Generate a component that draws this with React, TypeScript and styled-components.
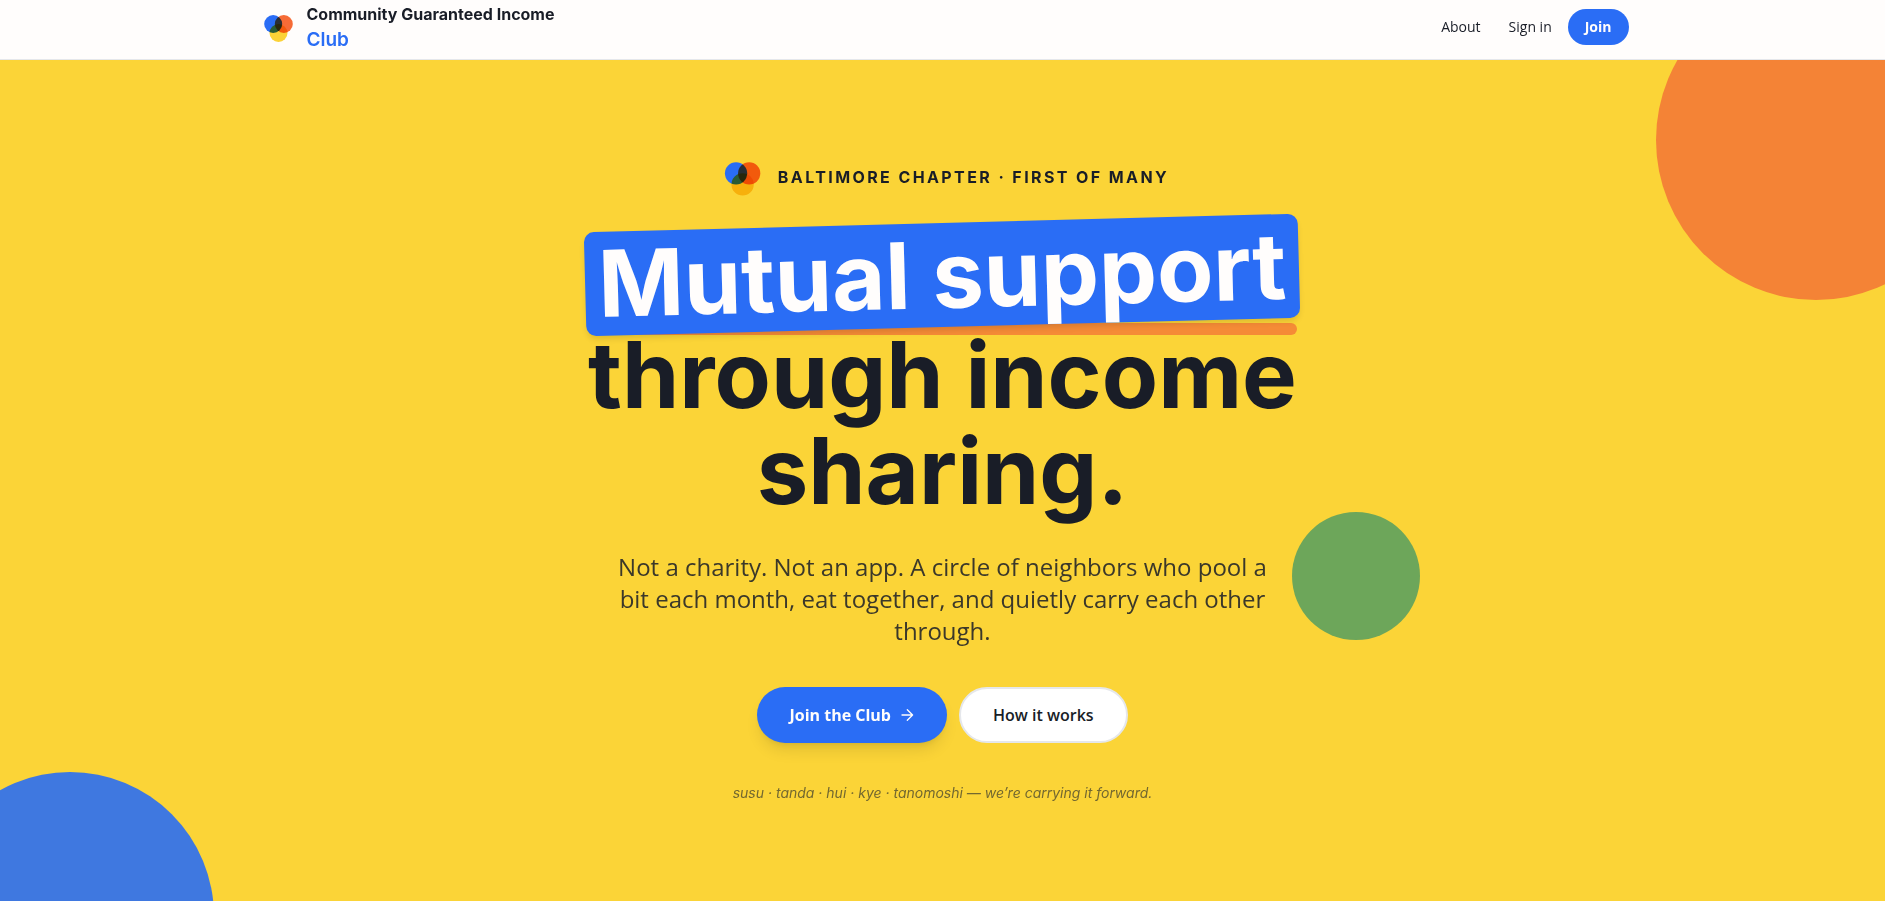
import React from "react";
import styled, { createGlobalStyle, ThemeProvider } from "styled-components";

const theme = {
  blue: "#2a6df5",
  orange: "#f66c36",
  yellow: "#fbd437",
  ink: "#191d27",
  paper: "#fffdfc",
  line: "#e5e7eb",
  display: `"Inter", "Liberation Sans", sans-serif`,
  body: `"Open Sans", "Noto Sans", sans-serif`,
};

const GlobalStyle = createGlobalStyle`
  *, *::before, *::after { box-sizing: border-box; }
  body {
    margin: 0;
    background: ${theme.yellow};
    color: ${theme.ink};
    font-family: ${theme.body};
    -webkit-font-smoothing: antialiased;
  }
`;

const Page = styled.div`
  display: flex;
  flex-direction: column;
  min-height: 100vh;
`;

const Header = styled.header`
  background: ${(p) => p.theme.paper};
  border-bottom: 1px solid ${(p) => p.theme.line};
  padding: 1px 16px 6px;
`;

const HeaderInner = styled.div`
  display: flex;
  align-items: center;
  justify-content: space-between;
  max-width: 1372px;
  margin: 0 auto;
`;

const Brand = styled.a`
  display: flex;
  align-items: center;
  gap: 8px;
  color: inherit;
  text-decoration: none;
`;

const BrandName = styled.span`
  display: flex;
  flex-direction: column;
  font-family: ${(p) => p.theme.display};
  font-size: 16px;
  font-weight: 700;
  line-height: 26px;
`;

const BrandAccent = styled.span`
  color: ${(p) => p.theme.blue};
  font-size: 19px;
  font-weight: 600;
`;

const Nav = styled.nav`
  display: flex;
  align-items: center;
  gap: 4px;
`;

const NavLink = styled.a`
  padding: 8px 12px;
  color: inherit;
  font-size: 14px;
  font-weight: 500;
  line-height: 20px;
  text-decoration: none;
`;

const NavButton = styled.button`
  height: 36px;
  padding: 0 17px;
  border: 0;
  border-radius: 18px;
  background: ${(p) => p.theme.blue};
  color: ${(p) => p.theme.paper};
  font: 700 14px/20px ${(p) => p.theme.body};
`;

const Hero = styled.main`
  position: relative;
  display: flex;
  flex: 1;
  flex-direction: column;
  align-items: center;
  overflow: hidden;
  padding: 91px 16px 40px;
  background: ${(p) => p.theme.yellow};
  text-align: center;
`;

const Disc = styled.span<{ $size: number; $color: string }>`
  position: absolute;
  width: ${(p) => p.$size}px;
  height: ${(p) => p.$size}px;
  border-radius: 50%;
  background: ${(p) => p.$color};
`;

const OrangeDisc = styled(Disc)`
  top: -80px;
  right: -91px;
`;

const BlueDisc = styled(Disc)`
  bottom: -159px;
  left: -74px;
`;

const GreenDisc = styled(Disc)`
  top: 452px;
  left: calc(50% + 349px);
`;

const Eyebrow = styled.p`
  position: relative;
  display: flex;
  align-items: center;
  gap: 10px;
  margin: 0 0 20px;
  font-family: ${(p) => p.theme.display};
  font-size: 16px;
  font-weight: 700;
  letter-spacing: 0.15em;
  line-height: 24px;
  text-transform: uppercase;
`;

const Title = styled.h1`
  position: relative;
  max-width: 896px;
  margin: 0 0 32px;
  font-family: ${(p) => p.theme.display};
  font-size: 92px;
  font-weight: 700;
  line-height: 96px;
`;

const TitleLead = styled.span`
  position: relative;
  display: block;
  width: fit-content;
  margin: 0 auto;

  &::before {
    content: "";
    position: absolute;
    right: 3px;
    bottom: -8px;
    left: 3px;
    height: 12px;
    border-radius: 6px;
    background: #f58b36;
  }
`;

const Highlight = styled.mark`
  display: block;
  padding: 4px 13px;
  border-radius: 10px;
  background: ${(p) => p.theme.blue};
  box-shadow: 0 4px 6px -1px rgba(0, 0, 0, 0.12);
  color: ${(p) => p.theme.paper};
  transform: rotate(-1.5deg);
`;

const Lede = styled.p`
  position: relative;
  max-width: 672px;
  margin: 0 0 40px;
  color: #3b382a;
  font-size: 24px;
  line-height: 32px;
`;

const Actions = styled.div`
  position: relative;
  display: flex;
  flex-wrap: wrap;
  justify-content: center;
  gap: 12px;
  margin-bottom: 40px;
`;

const ActionButton = styled.button<{ $primary?: boolean }>`
  display: flex;
  align-items: center;
  gap: 8px;
  height: 56px;
  padding: 0 32px;
  border: ${(p) => (p.$primary ? "0" : `2px solid ${p.theme.line}`)};
  border-radius: 28px;
  background: ${(p) => (p.$primary ? p.theme.blue : "#ffffff")};
  box-shadow: ${(p) =>
    p.$primary ? "0 10px 15px -3px rgba(0, 0, 0, 0.1), 0 4px 6px -4px rgba(0, 0, 0, 0.1)" : "none"};
  color: ${(p) => (p.$primary ? p.theme.paper : p.theme.ink)};
  font-family: ${(p) => p.theme.body};
  font-size: 16px;
  font-weight: ${(p) => (p.$primary ? 700 : 600)};
  line-height: 24px;
`;

const Footnote = styled.p`
  position: relative;
  margin: 0;
  color: #736830;
  font-family: ${(p) => p.theme.display};
  font-size: 14px;
  font-style: italic;
  line-height: 20px;
`;

const MarkSvg = styled.svg`
  flex: none;

  .multiply {
    mix-blend-mode: multiply;
  }
`;

function ClubMark({ size }: { size: number }) {
  return (
    <MarkSvg width={size} height={size} viewBox="0 0 42 42" aria-hidden="true">
      <circle cx="16.2" cy="18" r="9" fill={theme.blue} />
      <circle className="multiply" cx="26.8" cy="18" r="9" fill={theme.orange} />
      <circle className="multiply" cx="21.5" cy="27" r="9" fill={theme.yellow} />
    </MarkSvg>
  );
}

function Arrow() {
  return (
    <svg width="16" height="16" viewBox="0 0 16 16" fill="none" stroke="currentColor" strokeWidth="1.3" strokeLinecap="round" strokeLinejoin="round" aria-hidden="true">
      <path d="M3 8h10.6M8.3 2.7 13.6 8l-5.3 5.3" />
    </svg>
  );
}

export default function App() {
  return (
    <ThemeProvider theme={theme}>
      <GlobalStyle />
      <Page>
        <Header>
          <HeaderInner>
            <Brand href="#">
              <ClubMark size={42} />
              <BrandName>
                Community Guaranteed Income
                <BrandAccent>Club</BrandAccent>
              </BrandName>
            </Brand>
            <Nav>
              <NavLink href="#about">About</NavLink>
              <NavLink href="#sign-in">Sign in</NavLink>
              <NavButton type="button">Join</NavButton>
            </Nav>
          </HeaderInner>
        </Header>
        <Hero>
          <OrangeDisc $size={320} $color="#f48336" />
          <BlueDisc $size={288} $color="#3f78e0" />
          <GreenDisc $size={128} $color="#6da65a" />
          <Eyebrow>
            <ClubMark size={52} />
            Baltimore chapter · First of many
          </Eyebrow>
          <Title>
            <TitleLead>
              <Highlight>Mutual support</Highlight>
            </TitleLead>{" "}
            through income sharing.
          </Title>
          <Lede>
            Not a charity. Not an app. A circle of neighbors who pool a bit each month, eat
            together, and quietly carry each other through.
          </Lede>
          <Actions>
            <ActionButton type="button" $primary>
              Join the Club
              <Arrow />
            </ActionButton>
            <ActionButton type="button">How it works</ActionButton>
          </Actions>
          <Footnote>susu · tanda · hui · kye · tanomoshi — we’re carrying it forward.</Footnote>
        </Hero>
      </Page>
    </ThemeProvider>
  );
}
